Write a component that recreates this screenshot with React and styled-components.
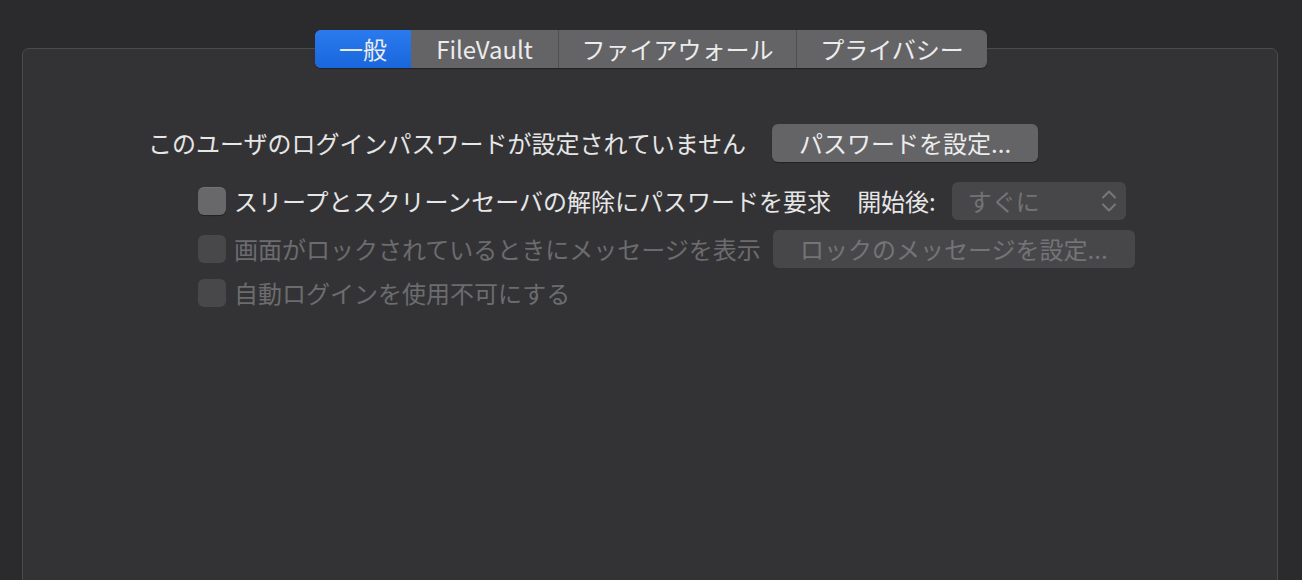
import styled, { createGlobalStyle } from "styled-components";

const GlobalStyle = createGlobalStyle`
  html, body {
    margin: 0;
    padding: 0;
    background: #2b2b2d;
    overflow: hidden;
  }
  body {
    font-family: "Noto Sans CJK JP", "Noto Sans", sans-serif;
    color: #e4e4e4;
  }
`;

const Page = styled.div`
  height: 580px;
  padding-top: 30px;
  box-sizing: border-box;
  overflow: hidden;
`;

const TabBar = styled.div`
  position: relative;
  z-index: 1;
  display: flex;
  width: max-content;
  margin: 0 auto;
  height: 38px;
  border-radius: 6px;
  background: #646466;
  box-shadow: 0 1px 1px rgba(0, 0, 0, 0.35);
  overflow: hidden;
`;

const Tab = styled.div`
  display: flex;
  align-items: center;
  justify-content: center;
  box-sizing: border-box;
  width: ${(p) => p.$width}px;
  font-size: 24px;
  line-height: 1;
  color: #ececec;
  background: ${(p) => (p.$active ? "linear-gradient(#2a7bef, #1a66dc)" : "transparent")};
  border-left: ${(p) => (p.$first ? "none" : "1px solid #4f4f51")};
`;

const Panel = styled.div`
  margin: -20px 24px 0 22px;
  height: 560px;
  box-sizing: border-box;
  background: #333336;
  border: 1px solid #4b4b4e;
  border-radius: 7px;
  padding-top: 75px;
`;

const Row = styled.div`
  display: flex;
  align-items: center;
  padding-left: ${(p) => p.$indent}px;
  margin-bottom: ${(p) => p.$after || 0}px;
  font-size: 24px;
  line-height: 1;
  color: ${(p) => (p.$disabled ? "#6c6c6f" : "#e6e6e6")};
`;

const Label = styled.span`
  white-space: nowrap;
  margin-right: ${(p) => p.$gap || 0}px;
`;

const Checkbox = styled.span`
  width: 28px;
  height: 28px;
  flex: none;
  box-sizing: border-box;
  border-radius: 6px;
  margin-right: 8px;
  background: ${(p) => (p.$disabled ? "#48484b" : "#68686b")};
  box-shadow: ${(p) => (p.$disabled ? "none" : "inset 0 1px 0 rgba(255,255,255,0.08), 0 1px 1px rgba(0,0,0,0.35)")};
`;

const Button = styled.div`
  height: 38px;
  display: flex;
  align-items: center;
  justify-content: center;
  box-sizing: border-box;
  width: ${(p) => p.$width}px;
  border-radius: 6px;
  font-size: 24px;
  white-space: nowrap;
  color: ${(p) => (p.$disabled ? "#747477" : "#ececec")};
  background: ${(p) => (p.$disabled ? "#47474a" : "#646467")};
  box-shadow: ${(p) => (p.$disabled ? "none" : "0 1px 1px rgba(0,0,0,0.35)")};
`;

const Popup = styled.div`
  height: 38px;
  width: 174px;
  box-sizing: border-box;
  display: flex;
  align-items: center;
  justify-content: space-between;
  padding: 0 8px 0 16px;
  border-radius: 6px;
  background: #47474a;
  color: #737376;
  font-size: 24px;
`;

function Chevrons() {
  return (
    <svg width="18" height="26" viewBox="0 0 18 26" fill="none">
      <path d="M3 9.5 L9 3.5 L15 9.5" stroke="#77777a" strokeWidth="2" strokeLinecap="round" strokeLinejoin="round" />
      <path d="M3 16.5 L9 22.5 L15 16.5" stroke="#77777a" strokeWidth="2" strokeLinecap="round" strokeLinejoin="round" />
    </svg>
  );
}

export default function App() {
  return (
    <Page>
      <GlobalStyle />
      <TabBar>
        <Tab $active $first $width={96}>一般</Tab>
        <Tab $first $width={147}>FileVault</Tab>
        <Tab $width={238}>ファイアウォール</Tab>
        <Tab $width={191}>プライバシー</Tab>
      </TabBar>
      <Panel>
        <Row $indent={125} $after={20}>
          <Label $gap={26}>このユーザのログインパスワードが設定されていません</Label>
          <Button $width={266}>パスワードを設定...</Button>
        </Row>
        <Row $indent={175} $after={10}>
          <Checkbox />
          <Label $gap={26}>スリープとスクリーンセーバの解除にパスワードを要求</Label>
          <Label $gap={16}>開始後:</Label>
          <Popup>
            <span>すぐに</span>
            <Chevrons />
          </Popup>
        </Row>
        <Row $indent={175} $after={11} $disabled>
          <Checkbox $disabled />
          <Label $gap={12}>画面がロックされているときにメッセージを表示</Label>
          <Button $width={362} $disabled>ロックのメッセージを設定...</Button>
        </Row>
        <Row $indent={175} $disabled>
          <Checkbox $disabled />
          <Label>自動ログインを使用不可にする</Label>
        </Row>
      </Panel>
    </Page>
  );
}
